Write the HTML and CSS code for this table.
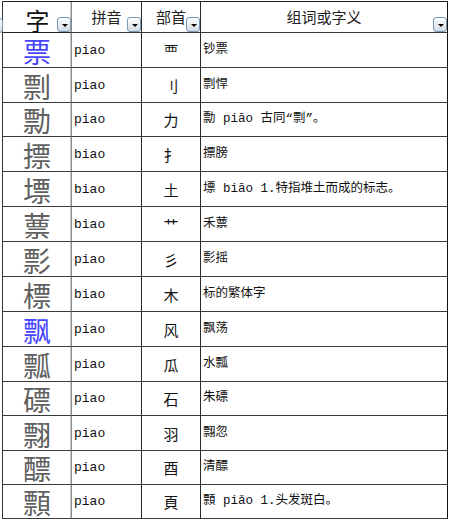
FILE: index.html
```html
<!DOCTYPE html>
<html lang="zh">
<head>
<meta charset="utf-8">
<link rel="stylesheet" href="styles.css">
</head>
<body>
<div class="sheet">
  <span class="dd dd-edge"></span>
  <div class="hd c1"><span class="hz">字</span><span class="dd"></span></div>
  <div class="hd c2"><span class="ht">拼音</span><span class="dd"></span></div>
  <div class="hd c3"><span class="ht">部首</span><span class="dd"></span></div>
  <div class="hd c4"><span class="ht">组词或字义</span><span class="dd"></span></div>

  <div class="big c1 blue">票</div><div class="py c2">piao</div><div class="bs c3">覀</div><div class="mn c4">钞票</div>
  <div class="big c1">剽</div><div class="py c2">piao</div><div class="bs c3">刂</div><div class="mn c4">剽悍</div>
  <div class="big c1">勡</div><div class="py c2">piao</div><div class="bs c3">力</div><div class="mn c4">勡 piāo 古同“剽”。</div>
  <div class="big c1">摽</div><div class="py c2">biao</div><div class="bs c3">扌</div><div class="mn c4">摽膀</div>
  <div class="big c1">墂</div><div class="py c2">biao</div><div class="bs c3">土</div><div class="mn c4">墂 biāo 1.特指堆土而成的标志。</div>
  <div class="big c1">蔈</div><div class="py c2">biao</div><div class="bs c3">艹</div><div class="mn c4">禾蔈</div>
  <div class="big c1">彯</div><div class="py c2">piao</div><div class="bs c3">彡</div><div class="mn c4">彯摇</div>
  <div class="big c1">標</div><div class="py c2">biao</div><div class="bs c3">木</div><div class="mn c4">标的繁体字</div>
  <div class="big c1 blue">飘</div><div class="py c2">piao</div><div class="bs c3">风</div><div class="mn c4">飘荡</div>
  <div class="big c1">瓢</div><div class="py c2">piao</div><div class="bs c3">瓜</div><div class="mn c4">水瓢</div>
  <div class="big c1">磦</div><div class="py c2">piao</div><div class="bs c3">石</div><div class="mn c4">朱磦</div>
  <div class="big c1">翲</div><div class="py c2">piao</div><div class="bs c3">羽</div><div class="mn c4">翲忽</div>
  <div class="big c1">醥</div><div class="py c2">piao</div><div class="bs c3">酉</div><div class="mn c4">清醥</div>
  <div class="big c1">顠</div><div class="py c2">piao</div><div class="bs c3">頁</div><div class="mn c4">顠 piǎo 1.头发斑白。</div>
</div>
</body>
</html>
```

FILE: styles.css
```css
html, body {
  margin: 0;
  padding: 0;
  background: #ffffff;
}

.sheet {
  position: relative;
  margin: 1px 0 0 2px;
  width: 446px;
  box-sizing: border-box;
  display: grid;
  grid-template-columns: 69px 70px 59px 247px;
  grid-template-rows: 31px 35px 35px 34px 35px 35px 35px 35px 35px 35px 35px 34px 35px 34px 34px;
  border-left: 1px solid #333;
  border-top: 1px solid #222;
  font-family: "Noto Sans CJK SC", sans-serif;
  color: #000;
}

.sheet > div {
  box-sizing: border-box;
  border-right: 1px solid #2a2a2a;
  border-bottom: 1px solid #3a3a3a;
  position: relative;
  display: flex;
  align-items: center;
  min-width: 0;
}

.sheet > .c1 {
  border-right-color: #8a8a8a;
  box-shadow: inset -1px 0 0 #c8c8c8;
}

.sheet > .c4 {
  border-right-color: #111;
}

.hd {
  justify-content: center;
}

.hd.c1 {
  border-bottom-color: #222;
}

.hz {
  font-size: 24px;
  line-height: 24px;
  height: 24px;
  color: #111;
  margin-top: 5px;
  margin-left: 1px;
}

.ht {
  font-size: 15px;
  line-height: 15px;
  color: #222;
  margin-top: -1px;
}

.dd {
  position: absolute;
  right: 0;
  bottom: 0;
  width: 14px;
  height: 15px;
  box-sizing: border-box;
  border: 1px solid #7898b8;
  border-radius: 3px;
  background: linear-gradient(#ffffff, #e6e9ee 60%, #d4d9e0);
}

.dd::after {
  content: "";
  position: absolute;
  left: 4px;
  top: 6px;
  border-left: 3px solid transparent;
  border-right: 3px solid transparent;
  border-top: 3px solid #000;
}

.dd-edge {
  left: -14px;
  right: auto;
  top: 16px;
  bottom: auto;
}

.big {
  justify-content: center;
  font-size: 28px;
  line-height: 28px;
  color: #606060;
  padding-top: 1px;
}

.blue {
  color: #4646ff;
}

.py {
  font-family: "Liberation Mono", monospace;
  font-size: 13px;
  line-height: 15px;
  padding-left: 2px;
  color: #111;
}

.bs {
  justify-content: center;
  font-size: 15px;
  line-height: 17px;
  color: #111;
}

.mn {
  font-family: "Liberation Mono", "Noto Sans CJK SC", monospace;
  font-size: 12.5px;
  line-height: 15px;
  padding-left: 2px;
  color: #111;
  white-space: nowrap;
}
```
